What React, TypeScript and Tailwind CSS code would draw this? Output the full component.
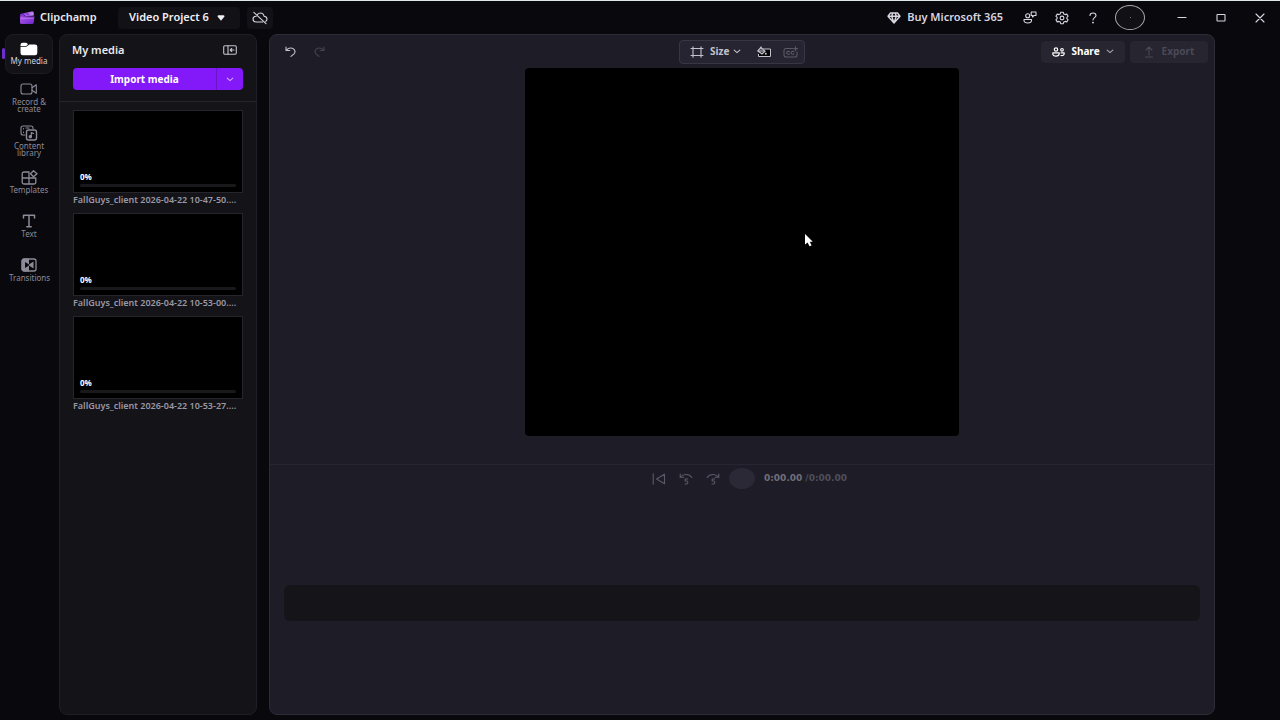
import React from "react";

interface IconProps {
  className?: string;
}

interface SkipProps {
  forward?: boolean;
}

interface MediaItem {
  name: string;
  progress: number;
}

interface NavItem {
  label: string;
  icon: React.ReactNode;
  active?: boolean;
}

const media: MediaItem[] = [
  { name: "FallGuys_client 2026-04-22 10-47-50....", progress: 0 },
  { name: "FallGuys_client 2026-04-22 10-53-00....", progress: 0 },
  { name: "FallGuys_client 2026-04-22 10-53-27....", progress: 0 },
];

const line = {
  fill: "none",
  stroke: "currentColor",
  strokeWidth: 1.1,
  strokeLinecap: "round" as const,
  strokeLinejoin: "round" as const,
  "aria-hidden": true,
};

const Logo = () => (
  <svg width="16" height="14" viewBox="0 0 16 14" aria-hidden="true">
    <defs>
      <linearGradient id="logoTop" x1="0" y1="0" x2="1" y2="0">
        <stop offset="0" stopColor="#7a2bd0" />
        <stop offset="1" stopColor="#c58bf6" />
      </linearGradient>
      <linearGradient id="logoBody" x1="0" y1="0" x2="1" y2="1">
        <stop offset="0" stopColor="#b25cf0" />
        <stop offset="1" stopColor="#6a24c4" />
      </linearGradient>
    </defs>
    <path d="M1 4 Q1 3 2 2.8 L12.8 .5 Q14.5 .3 14.7 1.8 L14.8 4.500 L1.500 6 Z" fill="url(#logoTop)" />
    <path d="M3.500 2.600 L6 5 M7.500 1.800 L10 4.400" stroke="#5a1ba8" strokeWidth="1" />
    <path d="M1 5.500 H15.500 L14.800 11.500 Q14.600 13 13 13 H2.500 Q1 13 1 11.500 Z" fill="url(#logoBody)" />
    <path d="M2 7.500 H14.500" stroke="#d9a8ff" strokeWidth=".8" opacity=".4" />
  </svg>
);

const CloudOffIcon = () => (
  <svg {...line} width="16" height="14" viewBox="0 0 16 14">
    <path d="M5.500 3.500 C6.200 2.400 7.200 2 8.300 2 C10.300 2 11.700 3.400 12 5.200 C13.700 5.300 15 6.400 15 8 C15 9 14.500 9.900 13.700 10.400" />
    <path d="M4.200 5.200 C2.300 5.300 1 6.500 1 8.100 C1 9.800 2.400 11 4.200 11 H10.600" />
    <path d="M1.800 1.300 L14 12.700" />
  </svg>
);

const DiamondIcon = () => (
  <svg {...line} strokeWidth={1.4} width="14" height="12" viewBox="0 0 14 12">
    <path d="M3.500 1 H10.500 L13 4.200 L7 11 L1 4.200 Z M1 4.200 H13 M4.700 4.200 L7 11 L9.300 4.200 L8.200 1 M4.700 4.200 L5.800 1" />
  </svg>
);

const FeedbackIcon = () => (
  <svg {...line} width="14" height="13" viewBox="0 0 14 13">
    <path d="M8.200 1 H13 V4.500 H11 L9.500 6 V4.500 H8.200 Z" />
    <circle cx="4.700" cy="4.700" r="2" />
    <path d="M1 8.500 H8.500 V9.500 C8.500 11 6.800 12 4.700 12 C2.600 12 1 11 1 9.500 Z" />
  </svg>
);

const SettingsIcon = () => (
  <svg {...line} width="14" height="14" viewBox="0 0 14 14">
    <path d="M5.800 1.200 H8.200 L8.700 2.900 L10.100 3.600 L11.800 3.100 L13.100 5.200 L11.900 6.400 V7.600 L13.100 8.800 L11.800 10.900 L10.100 10.400 L8.700 11.100 L8.200 12.800 H5.800 L5.300 11.100 L3.900 10.400 L2.200 10.900 L.9 8.800 L2.100 7.600 V6.400 L.9 5.200 L2.200 3.100 L3.900 3.600 L5.300 2.900 Z" />
    <circle cx="7" cy="7" r="1.900" />
  </svg>
);

const HelpIcon = () => (
  <svg {...line} width="8" height="12" viewBox="0 0 8 12">
    <path d="M1 3.500 C1 2 2.200 1 4 1 C5.800 1 7 2 7 3.400 C7 5.600 4 5.700 4 8" />
    <circle cx="4" cy="10.600" r=".4" fill="currentColor" />
  </svg>
);

const ChevronDown = ({ className }: IconProps) => (
  <svg {...line} className={className} width="8" height="5" viewBox="0 0 8 5">
    <path d="M1.200 1.200 L4 3.600 L6.800 1.200" />
  </svg>
);

const FolderIcon = () => (
  <svg width="18" height="14" viewBox="0 0 18 14" fill="currentColor" aria-hidden="true">
    <path d="M.5 3 Q.5 .8 2.800 .8 H5.800 Q6.600 .8 7.200 1.400 L8 2.200 L6.500 3.700 Q6.200 4 5.700 4 H.5 Z" />
    <path d="M.5 4.700 H6 Q6.800 4.700 7.400 4.100 L9.300 2.400 H15 Q17.300 2.400 17.300 4.600 V11 Q17.300 13.300 15 13.300 H2.800 Q.5 13.300 .5 11 Z" />
  </svg>
);

const CameraIcon = () => (
  <svg {...line} width="18" height="12" viewBox="0 0 18 12">
    <rect x="1" y="1" width="11" height="10" rx="2" />
    <path d="M12 4.800 L16.300 1.800 V10.200 L12 7.200" />
  </svg>
);

const LibraryIcon = () => (
  <svg {...line} width="18" height="16" viewBox="0 0 18 16">
    <path d="M5 10 H3 Q1 10 1 8 V3 Q1 1 3 1 H11 Q13 1 13 3 V3.500" />
    <path d="M3.500 3.500 V4 M3.500 7 V7.500 M6 3 H9" />
    <rect x="6.500" y="5" width="10" height="10" rx="2" strokeWidth="1.400" />
    <path d="M11.300 11.500 V7.500 L13.500 8.500" />
    <circle cx="10.300" cy="11.700" r="1.200" fill="currentColor" />
  </svg>
);

const TemplatesIcon = () => (
  <svg {...line} strokeWidth={1.3} width="17" height="15" viewBox="0 0 17 15">
    <path d="M8 2 H3 Q1.200 2 1.200 3.500 V12.500 Q1.200 14 3 14 H13 Q14.800 14 14.800 12.500 V8 H1.200 M8 2 V14" />
    <path d="M12.500 .8 L16 3.800 L12.500 6.800 L9.500 3.800 Z" />
  </svg>
);

const TextIcon = () => (
  <svg {...line} strokeWidth={1.5} width="14" height="14" viewBox="0 0 14 14">
    <path d="M1.500 4 V1.200 H12.500 V4 M7 1.200 V12.800 M4.800 12.800 H9.200" />
  </svg>
);

const TransitionsIcon = () => (
  <svg width="16" height="14" viewBox="0 0 16 14" aria-hidden="true">
    <path d="M3 .5 H8 V13.500 H3 Q.6 13.500 .6 11.300 V2.700 Q.6 .5 3 .5 Z" fill="currentColor" />
    <rect x="1" y="1" width="14" height="12" rx="2" fill="none" stroke="currentColor" strokeWidth="1.300" />
    <path d="M4 4 L8 6.500 V7.500 L4 10 Z" fill="#08080d" />
    <path d="M12.500 3.500 V10.500 L8 7.600 V6.400 Z" fill="currentColor" />
  </svg>
);

const CollapseIcon = () => (
  <svg {...line} width="14" height="10" viewBox="0 0 14 10">
    <rect x=".7" y=".7" width="12.600" height="8.600" rx="1.200" />
    <path d="M5 .7 V9.300 M11 5 H7.300 M8.700 3.500 L7.200 5 L8.700 6.500" />
  </svg>
);

const UndoIcon = ({ className }: IconProps) => (
  <svg {...line} className={className} width="11" height="11" viewBox="0 0 11 11">
    <path d="M1 1 V4.500 H4.800 M1.200 4.300 C3 2.300 5 1.600 7.200 2.300 C10 3.200 10.800 6 9 7.800 L6 10.300" />
  </svg>
);

const SizeIcon = () => (
  <svg {...line} width="14" height="12" viewBox="0 0 14 12">
    <rect x="3" y="2.500" width="8" height="7" />
    <path d="M3 2.500 V.8 M3 2.500 H1 M11 2.500 V.8 M11 2.500 H13 M3 9.500 V11.200 M3 9.500 H1 M11 9.500 V11.200 M11 9.500 H13" />
  </svg>
);

const FillIcon = () => (
  <svg width="16" height="12" viewBox="0 0 16 12" aria-hidden="true">
    <path d="M7 3 H14.500 V10.500 H2.500 V8" fill="#050507" stroke="currentColor" strokeWidth="1" />
    <path d="M4.800 1.500 L9 5.200 L6 8 L1.800 4.800 Z" fill="#262430" stroke="currentColor" strokeWidth="1.200" />
    <path d="M2.200 5 H8.500 M5 .5 V3.500" stroke="currentColor" strokeWidth="1" />
    <circle cx="9.800" cy="7.800" r="1" fill="currentColor" />
  </svg>
);

const CaptionsIcon = () => (
  <svg {...line} width="16" height="12" viewBox="0 0 16 12">
    <path d="M9.500 2.500 H3 Q1 2.500 1 4.300 V9 Q1 11 3 11 H12 Q14 11 14 9 V6" />
    <path d="M6.500 5.600 Q3.700 4.800 3.700 6.800 Q3.700 8.800 6.500 8 M11 5.600 Q8.200 4.800 8.200 6.800 Q8.200 8.800 11 8 M12.500 .8 V4.400 M10.700 2.600 H14.500" />
  </svg>
);

const PeopleIcon = () => (
  <svg {...line} strokeWidth={1.2} width="13" height="10" viewBox="0 0 13 10">
    <circle cx="4" cy="2.500" r="1.700" />
    <circle cx="10" cy="2.800" r="1.300" />
    <path d="M.8 5.800 H7.200 V6.800 C7.200 8.300 5.800 9.200 4 9.200 C2.200 9.200 .8 8.300 .8 6.800 Z M9 5.800 H12.200 V6.500 C12.200 8 11 8.700 9 8.500" />
  </svg>
);

const ExportIcon = () => (
  <svg {...line} width="10" height="12" viewBox="0 0 10 12">
    <path d="M5 9 V1 M2 4 L5 1 L8 4 M1.500 11 H8.500" />
  </svg>
);

const StartIcon = () => (
  <svg {...line} width="14" height="12" viewBox="0 0 14 12">
    <path d="M1.200 .8 V11.200 M12.500 1.200 V10.800 L4.500 6 Z" />
  </svg>
);

const SkipIcon = ({ forward }: SkipProps) => (
  <svg {...line} width="14" height="12" viewBox="0 0 14 12">
    <path
      d={
        forward
          ? "M12.800 1 V4.200 H9.200 M12.600 4 C9.500 .6 4 .6 1.200 4.500"
          : "M1.200 1 V4.200 H4.800 M1.400 4 C4.500 .6 10 .6 12.800 4.500"
      }
    />
    <path d="M8.700 6 H6.200 V8 H7.500 C9.300 8 9.300 11 7.500 11 H6" />
  </svg>
);

const navItems: NavItem[] = [
  { label: "My media", icon: <FolderIcon />, active: true },
  { label: "Record & create", icon: <CameraIcon /> },
  { label: "Content library", icon: <LibraryIcon /> },
  { label: "Templates", icon: <TemplatesIcon /> },
  { label: "Text", icon: <TextIcon /> },
  { label: "Transitions", icon: <TransitionsIcon /> },
];

const Header = () => (
  <header className="flex h-[34px] shrink-0 items-center border-t border-[#dfe6e8] text-[#d8d6e0]">
    <div className="flex flex-1 items-center pl-[19px]">
      <Logo />
      <span className="ml-[5px] w-[78px] text-[11px] font-semibold text-[#e9e8ee]">
        Clipchamp
      </span>
      <button className="flex h-[22px] w-[122px] items-center justify-center gap-2 rounded-sm bg-[#121116] pr-1 text-[11px] font-semibold whitespace-nowrap text-[#f1f0f5]">
        Video Project 6
        <svg width="8" height="6" viewBox="0 0 8 6" fill="currentColor" aria-hidden="true">
          <path d="M.5 1.500 Q.5 .3 1.700 .3 H6.300 Q7.500 .3 7.500 1.500 L4 5.800 Z" />
        </svg>
      </button>
      <button
        aria-label="Cloud backup off"
        className="ml-[7px] flex h-[22px] w-[26px] items-center justify-center rounded-sm bg-[#121116]"
      >
        <CloudOffIcon />
      </button>
    </div>
    <button className="mr-5 flex items-center gap-1.5 text-[11px] font-semibold whitespace-nowrap">
      <DiamondIcon />
      Buy Microsoft 365
    </button>
    <div className="flex items-center">
      <button aria-label="Feedback" className="flex w-8 justify-start">
        <FeedbackIcon />
      </button>
      <button aria-label="Settings" className="flex w-[34px] justify-start">
        <SettingsIcon />
      </button>
      <button aria-label="Help" className="flex w-[26px] justify-start">
        <HelpIcon />
      </button>
      <button
        aria-label="Account"
        className="flex h-[25px] w-[30px] items-center justify-center rounded-[50%] border border-[#a9a8ae] bg-[#111014]"
      >
        <span className="size-px bg-[#77757d]" />
      </button>
    </div>
    <div className="ml-[17px] flex pr-px">
      <button aria-label="Minimize" className="flex w-[39px] items-center justify-center">
        <svg {...line} width="10" height="10" viewBox="0 0 10 10">
          <path d="M1 4.500 H9" />
        </svg>
      </button>
      <button aria-label="Maximize" className="flex w-[39px] items-center justify-center">
        <svg {...line} width="10" height="10" viewBox="0 0 10 10">
          <rect x="1" y="1.500" width="8" height="6.500" rx=".5" />
        </svg>
      </button>
      <button aria-label="Close" className="flex w-[39px] items-center justify-center">
        <svg {...line} width="10" height="10" viewBox="0 0 10 10">
          <path d="M1 1 L9 9 M9 1 L1 9" />
        </svg>
      </button>
    </div>
  </header>
);

const Sidebar = () => (
  <nav className="relative flex w-[59px] shrink-0 flex-col pl-[5px] text-[#8d8b98]">
    <span className="absolute top-[14px] left-[2px] h-[11px] w-[3px] rounded-full bg-[#6a2fd0]" />
    {navItems.map((item) => (
      <button
        key={item.label}
        className={
          item.active
            ? "mb-[5px] flex h-10 w-12 flex-col items-center rounded-lg border border-[#1d1c22] bg-[#131217] pt-1.5 text-white"
            : "flex h-11 w-12 flex-col items-center gap-px pt-0.5"
        }
      >
        <span className="flex h-4 items-center">{item.icon}</span>
        <span className="max-w-10 text-[8px] leading-[7px]">
          {item.active ? (
            <span className="whitespace-nowrap text-[#d5d3dd]">{item.label}</span>
          ) : (
            item.label
          )}
        </span>
      </button>
    ))}
  </nav>
);

const MediaCard = ({ item }: { item: MediaItem }) => (
  <li className="mb-[7px]">
    <div className="flex h-[83px] flex-col justify-end border border-[#26252b] bg-black px-1.5 pb-[5px]">
      <span className="text-[8px] leading-3 font-bold text-white">{item.progress}%</span>
      <div className="mt-px h-[3px] rounded-full bg-[#19191b]">
        <div className="h-full bg-[#8318f8]" style={{ width: `${item.progress}%` }} />
      </div>
    </div>
    <p className="mt-px h-3 overflow-hidden text-[9px] leading-3 font-semibold whitespace-nowrap text-[#9a98a4]">
      {item.name}
    </p>
  </li>
);

const MediaPanel = () => (
  <aside className="w-[198px] shrink-0 rounded-lg border border-[#1f1e24] bg-[#141318]">
    <div className="flex h-[30px] items-center justify-between pr-[19px] pl-3">
      <h2 className="text-[11px] font-semibold text-[#e9e8ee]">My media</h2>
      <button aria-label="Collapse panel" className="text-[#c3c1cc]">
        <CollapseIcon />
      </button>
    </div>
    <div className="mx-[13px] mt-[3px] flex h-[22px] overflow-hidden rounded-sm bg-[#8318f8] text-white">
      <button className="flex-1 text-[10px] font-bold">Import media</button>
      <button
        aria-label="More import options"
        className="flex w-[27px] items-center justify-center border-l border-[#6a14cc] text-[#d3aaff]"
      >
        <ChevronDown />
      </button>
    </div>
    <ul className="mt-[11px] border-t border-[#26252b] px-[13px] pt-2">
      {media.map((item) => (
        <MediaCard key={item.name} item={item} />
      ))}
    </ul>
  </aside>
);

const Toolbar = () => (
  <div className="grid h-[33px] shrink-0 grid-cols-[1fr_auto_1fr] items-center px-1.5">
    <div className="flex gap-[18px] pl-[9px]">
      <button aria-label="Undo" className="text-[#c3c1cc]">
        <UndoIcon />
      </button>
      <button aria-label="Redo" disabled className="text-[#454350]">
        <UndoIcon className="-scale-x-100" />
      </button>
    </div>
    <div className="flex h-6 w-[126px] items-center justify-between rounded-sm border border-[#383644] bg-[#262430] pr-[5px] pl-2.5 text-[#c3c1cc]">
      <button className="flex items-center gap-1 text-[10px] font-bold">
        <SizeIcon />
        <span className="pl-0.5">Size</span>
        <ChevronDown />
      </button>
      <div className="flex gap-[11px]">
        <button aria-label="Fill">
          <FillIcon />
        </button>
        <button aria-label="Captions" disabled className="text-[#5a5866]">
          <CaptionsIcon />
        </button>
      </div>
    </div>
    <div className="flex justify-end gap-[5px] text-[10px] font-bold">
      <button className="flex h-[22px] w-[84px] items-center justify-center gap-1.5 rounded-sm bg-[#262530] text-white">
        <PeopleIcon />
        <span>Share</span>
        <ChevronDown className="text-[#a9a7b4]" />
      </button>
      <button
        disabled
        className="flex h-[22px] w-[78px] items-center justify-center gap-2 rounded-sm bg-[#262530] text-[#4b4957]"
      >
        <ExportIcon />
        Export
      </button>
    </div>
  </div>
);

const Playback = () => (
  <div className="grid h-[27px] grid-cols-[1fr_auto_1fr] items-center text-[#5b5967]">
    <div className="flex items-center justify-end gap-[13px] pr-[9px]">
      <button aria-label="Go to start">
        <StartIcon />
      </button>
      <button aria-label="Back 5 seconds">
        <SkipIcon />
      </button>
      <button aria-label="Forward 5 seconds">
        <SkipIcon forward />
      </button>
    </div>
    <button aria-label="Play" className="h-[21px] w-[26px] rounded-[50%] bg-[#2a2935]" />
    <span className="flex gap-[3px] pl-[9px] font-['DejaVu_Sans',sans-serif] text-[9px] font-bold whitespace-nowrap text-[#706e7b]">
      <span>0:00.00</span>
      <span className="text-[#4f4d5a]">/0:00.00</span>
    </span>
  </div>
);

const Cursor = () => (
  <svg
    className="absolute top-[45%] left-[64%]"
    width="10"
    height="14"
    viewBox="0 0 10 14"
    aria-hidden="true"
  >
    <path d="M2 0 V10.500 L4.600 8.500 L6.500 12.300 L8.600 11.500 L6.800 7.800 H9.800 Z" fill="#fff" />
  </svg>
);

export default function App() {
  return (
    <div className="flex h-screen flex-col overflow-hidden bg-[#08080d] font-['Noto_Sans','Open_Sans',sans-serif]">
      <Header />
      <div className="flex min-h-0 flex-1 pb-[5px]">
        <Sidebar />
        <MediaPanel />
        <main className="mr-[65px] ml-3 flex min-w-0 flex-1 flex-col rounded-lg border border-[#2c2b36] bg-[#1e1d27]">
          <Toolbar />
          <div className="flex min-h-0 flex-1 justify-center pb-7">
            <div className="relative aspect-[434/368] h-full rounded-sm bg-black">
              <Cursor />
            </div>
          </div>
          <section className="h-[250px] shrink-0 border-t border-[#262531] px-3.5">
            <Playback />
            <div className="mt-[93px] h-9 rounded-md bg-[#151419]" />
          </section>
        </main>
      </div>
    </div>
  );
}
